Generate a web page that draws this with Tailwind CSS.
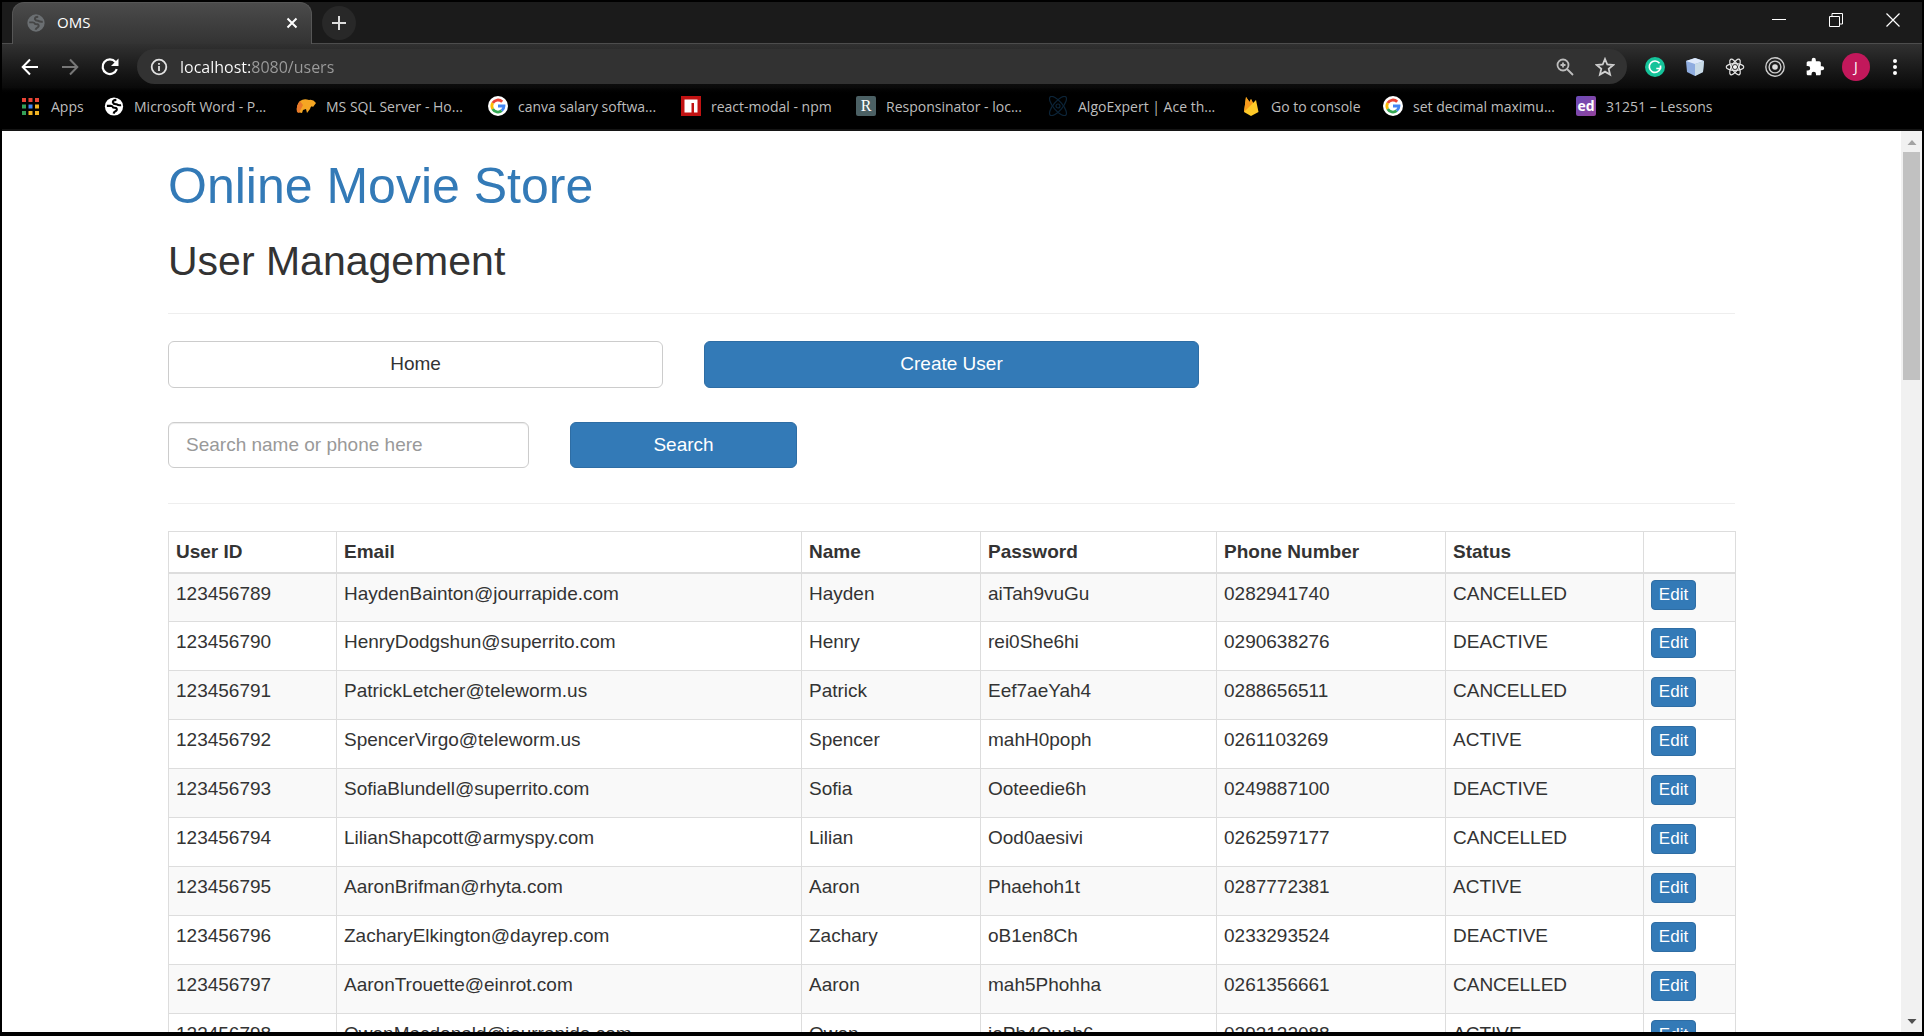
<!DOCTYPE html>
<html lang="en">
<head>
<meta charset="utf-8">
<title>OMS</title>
<script src="https://cdn.jsdelivr.net/npm/@tailwindcss/browser@4"></script>
</head>
<body class="bg-black">
<svg class="hidden" aria-hidden="true">
  <symbol id="globe" viewBox="0 0 20 20"><circle cx="10" cy="10" r="9.600" fill="currentColor"/><path d="M12.500 3 Q8.500 3.200 8.800 5.700 Q9.500 7.800 12.500 7.600 Q14.500 9 17.500 8.600 M2.500 9.300 H6.500 Q8.500 9.500 9 11 L12 11.500 Q14 13 12 14.800 Q10 15.500 9.500 17.500" fill="none" stroke="var(--cut)" stroke-width="2.200" stroke-linejoin="round"/></symbol>
  <symbol id="google" viewBox="0 0 20 20"><circle cx="10" cy="10" r="10" fill="#fff"/><g fill="none" stroke-width="2.800"><path d="M4.700 7 A6 6 0 0 1 14.200 5.800" stroke="#ea4335"/><path d="M4.700 7 A6 6 0 0 0 4.700 13" stroke="#fbbc05"/><path d="M4.700 13 A6 6 0 0 0 13.700 14.700" stroke="#34a853"/><path d="M10 10 H16 A6 6 0 0 1 13.700 14.700" stroke="#4285f4"/></g></symbol>
</svg>
<div class="flex h-screen flex-col overflow-hidden border-2 border-black font-['Open_Sans','Noto_Sans',sans-serif]">
  <!-- Tab strip -->
  <header class="shrink-0 bg-black">
    <div class="flex h-[42px] items-stretch border-b border-[#4d4d4d] bg-[#1b1b1b]">
      <div class="-mb-px ml-[10px] flex w-[300px] items-center rounded-t-xl border-x border-t border-[#565656] bg-linear-to-b from-[#4b4b4b] to-[#333333] pb-[2px] pl-[14px] pr-[11px] text-[15px] text-white">
        <svg class="mr-3 h-[18px] w-[18px] text-[#6b6f72] [--cut:#454545]"><use href="#globe"/></svg>
        <span class="grow">OMS</span>
        <button aria-label="Close tab"><svg class="h-4 w-4" viewBox="0 0 16 16" fill="none" stroke="#fff" stroke-width="2"><path d="M3.500 3.500 12.500 12.500 M12.500 3.500 3.500 12.500"/></svg></button>
      </div>
      <button aria-label="New tab" class="mx-[10px] my-1 flex h-[34px] w-[34px] items-center justify-center rounded-full bg-[#282828]"><svg class="h-4 w-4" viewBox="0 0 16 16" stroke="#ddd" stroke-width="2"><path d="M8 1 V15 M1 8 H15"/></svg></button>
      <div class="ml-auto flex items-center gap-[43px] pb-[5px] pr-[22px]">
        <button aria-label="Minimize"><svg class="h-[14px] w-[14px]" viewBox="0 0 14 14" stroke="#fff"><path d="M0 6.500 H14"/></svg></button>
        <button aria-label="Restore"><svg class="h-[14px] w-[14px]" viewBox="0 0 14 14" fill="none" stroke="#fff"><path d="M.500 3.500 H10.500 V13.500 H.500 Z M3 3.500 V.500 H13.500 V11 H10.500"/></svg></button>
        <button aria-label="Close window"><svg class="h-[14px] w-[14px]" viewBox="0 0 14 14" stroke="#fff" stroke-width="1.200"><path d="M.500 .500 13.500 13.500 M13.500 .500 .500 13.500"/></svg></button>
      </div>
    </div>
    <!-- Toolbar and bookmarks -->
    <div class="bg-linear-to-b from-[#313131] via-[#0a0a0a] via-50% to-black to-60%">
      <div class="flex h-[45px] items-center pl-[18px] pr-[17px]">
        <div class="flex gap-5">
          <button aria-label="Back"><svg class="h-5 w-5" viewBox="0 0 20 20" fill="none" stroke="#fff" stroke-width="2"><path d="M18 10 H3 M10 2.500 2.700 10 10 17.500"/></svg></button>
          <button aria-label="Forward"><svg class="h-5 w-5" viewBox="0 0 20 20" fill="none" stroke="#777" stroke-width="2"><path d="M2 10 H17 M10 2.500 17.300 10 10 17.500"/></svg></button>
          <button aria-label="Reload"><svg class="h-5 w-5" viewBox="0 0 20 20" fill="none" stroke="#fff" stroke-width="2.200"><path d="M16.800 12.200 A7.300 7.300 0 1 1 15.500 5"/><path d="M18.500 1.500 V9 H11 Z" fill="#fff" stroke="none"/></svg></button>
        </div>
        <div class="ml-[17px] flex h-[35px] grow items-center rounded-full bg-[#323232] pl-[13px] pr-3">
          <svg class="h-[18px] w-[18px]" viewBox="0 0 18 18" fill="none" stroke="#e2e2e2" stroke-width="1.800"><circle cx="9" cy="9" r="7.300"/><path d="M9 8 V13 M9 5 V6.800"/></svg>
          <input type="text" aria-label="Address" value="localhost:8080/users" class="ml-3 min-w-0 grow bg-linear-to-r from-white from-[70px] to-[#9c9c9c] to-[70px] bg-clip-text text-[16px] leading-6 text-transparent">
          <button aria-label="Zoom"><svg class="h-[18px] w-[18px]" viewBox="0 0 18 18" fill="none" stroke="#bdbdbd" stroke-width="1.800"><circle cx="7" cy="7" r="5.500"/><path d="M11 11 17 17 M4.500 7 H9.500 M7 4.500 V9.500"/></svg></button>
          <button aria-label="Bookmark this page" class="ml-[21px]"><svg class="h-5 w-5" viewBox="0 0 20 20" fill="none" stroke="#cfcfcf" stroke-width="1.800"><path d="M10 2 12.300 7.500 18.200 8 13.700 11.900 15.100 17.600 10 14.600 4.900 17.600 6.300 11.900 1.800 8 7.700 7.500 Z"/></svg></button>
        </div>
        <div class="ml-[18px] flex items-center gap-5">
          <svg class="h-5 w-5" viewBox="0 0 20 20"><circle cx="10" cy="10" r="10" fill="#15c39a"/><path d="M14.500 6.200 A5.700 5.700 0 1 0 15.400 11.500 H11.300 M15.500 8.500 V11.500" fill="none" stroke="#fff" stroke-width="1.700"/></svg>
          <svg class="h-5 w-5" viewBox="0 0 20 20"><path d="M10 1 19 4 18 15 10 19 2 15 1 4 Z" fill="#8fade0"/><path d="M10 1 19 4 10 7 1 4Z" fill="#dfeafa"/><path d="M10 7 19 4 18 15 10 19Z" fill="#c9dbe6"/></svg>
          <svg class="h-5 w-5" viewBox="0 0 20 20" fill="none" stroke="#e6e6e6" stroke-width="1.200"><ellipse cx="10" cy="10" rx="8.800" ry="3.400"/><ellipse cx="10" cy="10" rx="8.800" ry="3.400" transform="rotate(60 10 10)"/><ellipse cx="10" cy="10" rx="8.800" ry="3.400" transform="rotate(120 10 10)"/><circle cx="10" cy="10" r="1.500" fill="#fff"/></svg>
          <svg class="h-5 w-5" viewBox="0 0 20 20" fill="none" stroke="#ccc" stroke-width="1.400"><circle cx="10" cy="10" r="9.200"/><circle cx="10" cy="10" r="5.900"/><circle cx="10" cy="10" r="2.800" fill="#ddd" stroke="none"/></svg>
          <svg class="h-5 w-5" viewBox="0 0 24 24" fill="#fff"><path d="M20.500 11H19V7c0-1.100-.9-2-2-2h-4V3.500a2.500 2.500 0 0 0-5 0V5H4c-1.100 0-2 .9-2 2v3.800h1.500a2.700 2.700 0 0 1 0 5.400H2V20c0 1.100.9 2 2 2h3.800v-1.500a2.700 2.700 0 0 1 5.400 0V22H17c1.100 0 2-.9 2-2v-4h1.500a2.500 2.500 0 0 0 0-5z"/></svg>
        </div>
        <button class="ml-[17px] h-7 w-7 rounded-full bg-[#c2185b] text-sm text-white">J</button>
        <button aria-label="Menu" class="ml-[15px]"><svg class="h-5 w-5" viewBox="0 0 20 20" fill="#fff"><circle cx="10" cy="4" r="2"/><circle cx="10" cy="10" r="2"/><circle cx="10" cy="16" r="2"/></svg></button>
      </div>
      <nav class="flex h-[42px] items-center overflow-hidden border-b-2 border-[#141414] pl-5 pb-[6px] text-[14px] whitespace-nowrap text-[#bdbdbd]">
        <a href="#" class="flex w-[82px] shrink-0 items-center gap-3"><svg class="h-[17px] w-[17px]" viewBox="0 0 17 17"><path d="M0 0h4v4H0zM6.500 0h4v4h-4zM13 0h4v4h-4z" fill="#e94435"/><path d="M0 6.500h4v4H0zM0 13h4v4H0z" fill="#34a058"/><path d="M6.500 6.500h4v4h-4z" fill="#4285f4"/><path d="M13 6.500h4v4h-4zM6.500 13h4v4h-4zM13 13h4v4h-4z" fill="#f0b323"/></svg>Apps</a>
        <a href="#" class="flex w-[192px] shrink-0 items-center gap-[10px]"><svg class="h-[19px] w-5 text-white [--cut:#000]"><use href="#globe"/></svg>Microsoft Word - P...</a>
        <a href="#" class="flex w-[192px] shrink-0 items-center gap-[10px]"><svg class="h-5 w-5" viewBox="0 0 20 20"><path d="M1 16 Q0 9 4 5 Q8 2 13 4 Q17 3 20 7 L17 11 Q15 9 14 13 L11 17 10 13 7 14 6 17 Z" fill="#f5a623"/><path d="M1 16 Q0 9 4 5 L7 9 3 17Z" fill="#e8782a"/></svg>MS SQL Server - Ho...</a>
        <a href="#" class="flex w-[193px] shrink-0 items-center gap-[10px]"><svg class="h-5 w-5"><use href="#google"/></svg>canva salary softwa...</a>
        <a href="#" class="flex w-[175px] shrink-0 items-center gap-[10px]"><svg class="h-5 w-5" viewBox="0 0 20 20"><path d="M0 0H20V20H0Z" fill="#c11212"/><path d="M3.500 3.500H16.500V16.500H13V7H10.500V16.500H3.500Z" fill="#fff"/></svg>react-modal - npm</a>
        <a href="#" class="flex w-[192px] shrink-0 items-center gap-[10px]"><span class="flex h-5 w-5 items-center justify-center rounded-xs bg-[#4b6064] font-['Liberation_Serif',serif] text-base text-white">R</span>Responsinator - loc...</a>
        <a href="#" class="flex w-[193px] shrink-0 items-center gap-[10px]"><svg class="h-5 w-5" viewBox="0 0 20 20" fill="none" stroke="#0c2438" stroke-width="1.200"><ellipse cx="10" cy="10" rx="12" ry="4.500" transform="rotate(50 10 10)"/><ellipse cx="10" cy="10" rx="12" ry="4.500" transform="rotate(130 10 10)"/><circle cx="10" cy="10" r="2"/></svg>AlgoExpert | Ace th...</a>
        <a href="#" class="flex w-[142px] shrink-0 items-center gap-[10px]"><svg class="h-5 w-5" viewBox="0 0 20 20"><path d="M3 16 5 1 8.500 6 10 3 12 7 15 4 17.500 16 10 20Z" fill="#ffca28"/><path d="M3 16 5 1 8.500 6 10 3 12 7Z" fill="#f89a1c"/></svg>Go to console</a>
        <a href="#" class="flex w-[193px] shrink-0 items-center gap-[10px]"><svg class="h-5 w-5"><use href="#google"/></svg>set decimal maximu...</a>
        <a href="#" class="flex shrink-0 items-center gap-[10px]"><span class="flex h-5 w-5 items-center justify-center rounded-xs bg-linear-to-br from-[#6a4bb8] to-[#93419c] pb-px text-sm font-bold text-white">ed</span>31251 – Lessons</a>
      </nav>
    </div>
  </header>

  <div class="mb-[2px] flex min-h-0 grow bg-white font-['Liberation_Sans',Arial,sans-serif] text-[19px] leading-[27px] text-[#333]">
    <main class="min-w-0 grow overflow-hidden">
      <div class="mx-auto max-w-[1567px] pt-7">
        <h1 class="text-[50px] leading-[55px]"><a href="#" class="text-[#337ab7]">Online Movie Store</a></h1>
        <h2 class="mt-6 text-[41px] leading-[46px]">User Management</h2>
        <hr class="mt-[29px] border-[#eee]">
        <div class="mt-[27px] grid grid-cols-12 gap-x-[41px]">
          <button class="col-span-4 h-[47px] rounded-md border border-[#ccc] bg-white pb-[2px]">Home</button>
          <button class="col-span-4 h-[47px] rounded-md border border-[#2e6da4] bg-[#337ab7] pb-[2px] text-white">Create User</button>
        </div>
        <form class="mt-[34px] grid grid-cols-12 gap-x-[41px]">
          <input type="text" aria-label="Search name or phone" placeholder="Search name or phone here" class="col-span-3 h-[46px] min-w-0 rounded-md border border-[#ccc] px-[17px] shadow-[inset_0_1px_1px_rgba(0,0,0,.075)] placeholder:text-[#999]">
          <button type="button" class="col-span-2 h-[46px] rounded-md border border-[#2e6da4] bg-[#337ab7] pb-[2px] text-white">Search</button>
        </form>
        <hr class="mt-[35px] border-[#eee]">
        <table class="mt-[27px] w-full table-fixed border-collapse border border-[#ddd] text-left">
          <colgroup><col class="w-[168px]"><col class="w-[465px]"><col class="w-[179px]"><col class="w-[236px]"><col class="w-[229px]"><col class="w-[198px]"><col class="w-[92px]"></colgroup>
          <thead>
            <tr class="h-[41px] border-b-2 border-[#ddd] [&>th]:border-x [&>th]:border-[#ddd] [&>th]:px-[7px] [&>th]:font-bold"><th>User ID</th><th>Email</th><th>Name</th><th>Password</th><th>Phone Number</th><th>Status</th><th aria-label="Actions"></th></tr>
          </thead>
          <tbody id="users" class="[&_td]:h-[49px] [&_td]:border [&_td]:border-[#ddd] [&_td]:px-[7px] [&_td]:pt-[6px] [&_td]:align-top [&>tr:nth-child(odd)]:bg-[#f9f9f9]"></tbody>
        </table>
      </div>
    </main>
    <div class="flex w-[21px] shrink-0 flex-col items-center bg-[#f1f1f1]">
      <svg class="h-[21px] w-5" viewBox="0 0 20 21"><path d="M5.500 14 10 9 14.500 14Z" fill="#a3a3a3"/></svg>
      <div class="h-[228px] w-[17px] bg-[#c1c1c1]"></div>
      <svg class="mt-auto h-[21px] w-5" viewBox="0 0 20 21"><path d="M5.500 8 10 13 14.500 8Z" fill="#505050"/></svg>
    </div>
  </div>
</div>
<script>
  const users = [
    ['123456789', 'HaydenBainton@jourrapide.com', 'Hayden', 'aiTah9vuGu', '0282941740', 'CANCELLED'],
    ['123456790', 'HenryDodgshun@superrito.com', 'Henry', 'rei0She6hi', '0290638276', 'DEACTIVE'],
    ['123456791', 'PatrickLetcher@teleworm.us', 'Patrick', 'Eef7aeYah4', '0288656511', 'CANCELLED'],
    ['123456792', 'SpencerVirgo@teleworm.us', 'Spencer', 'mahH0poph', '0261103269', 'ACTIVE'],
    ['123456793', 'SofiaBlundell@superrito.com', 'Sofia', 'Ooteedie6h', '0249887100', 'DEACTIVE'],
    ['123456794', 'LilianShapcott@armyspy.com', 'Lilian', 'Ood0aesivi', '0262597177', 'CANCELLED'],
    ['123456795', 'AaronBrifman@rhyta.com', 'Aaron', 'Phaehoh1t', '0287772381', 'ACTIVE'],
    ['123456796', 'ZacharyElkington@dayrep.com', 'Zachary', 'oB1en8Ch', '0233293524', 'DEACTIVE'],
    ['123456797', 'AaronTrouette@einrot.com', 'Aaron', 'mah5Phohha', '0261356661', 'CANCELLED'],
    ['123456798', 'OwenMacdonald@jourrapide.com', 'Owen', 'iePh4Quah6', '0293132088', 'ACTIVE'],
  ];
  document.getElementById('users').innerHTML = users.map(u =>
    '<tr>' + u.map(v => `<td>${v}</td>`).join('') +
    '<td><button class="block h-[30px] w-[45px] rounded-sm border border-[#2e6da4] bg-[#337ab7] text-[17px] leading-6 text-white">Edit</button></td></tr>').join('');
</script>
</body>
</html>
